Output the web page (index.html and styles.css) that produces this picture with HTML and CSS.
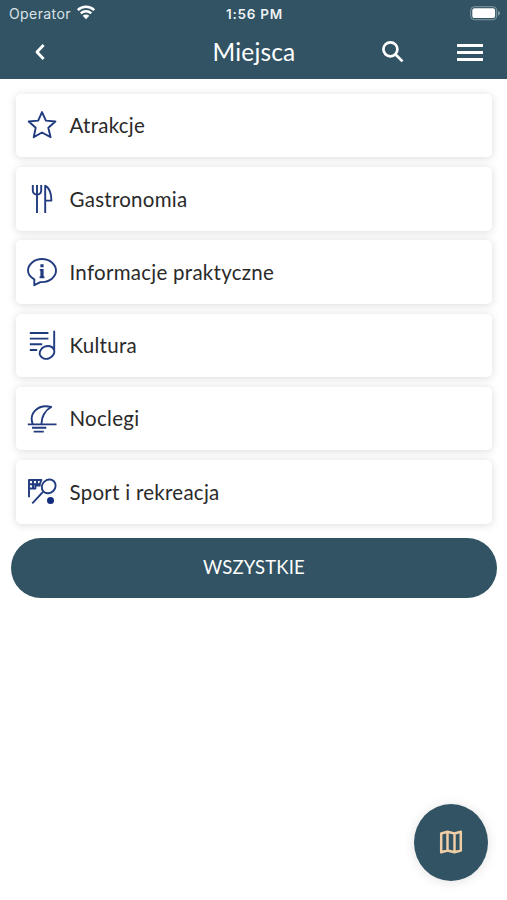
FILE: index.html
```html
<!DOCTYPE html>
<html lang="pl">

<head>
    <meta charset="UTF-8" />
    <meta name="viewport" content="width=device-width, initial-scale=1.0" />
    <title>Miejsca</title>
    <link rel="stylesheet" href="styles.css">
</head>

<body>
    <header class="header">
        <div class="status">
            <div class="operator">
                <span>Operator</span>
                <svg class="wifi" viewBox="0 0 20 15">
                    <path d="M1.8 5.2a11.6 11.6 0 0 1 16.4 0M4.8 8.3a7.4 7.4 0 0 1 10.4 0" />
                    <path class="dot" d="M10 14.2l-3.3-3.4a4.7 4.7 0 0 1 6.6 0z" />
                </svg>
            </div>
            <div class="time">1:56 PM</div>
            <svg class="battery" viewBox="0 0 31 15">
                <rect class="case" x=".7" y=".7" width="26" height="13" rx="3.6" />
                <rect x="2.3" y="2.3" width="22.8" height="9.8" rx="2.2" />
                <path class="tip" d="M28 4.8q2 .8 2 2.4t-2 2.4z" />
            </svg>
        </div>
        <nav class="navbar">
            <button class="back">
                <svg viewBox="0 0 12 18">
                    <path d="M9.6 2L3 9l6.6 7" />
                </svg>
            </button>
            <h1>Miejsca</h1>
            <div class="actions">
                <button class="search">
                    <svg viewBox="0 0 24 24">
                        <circle cx="9.4" cy="9.3" r="7" />
                        <path d="M14.3 14.2l7.2 7.2" />
                    </svg>
                </button>
                <button class="menu">
                    <span></span>
                    <span></span>
                    <span></span>
                </button>
            </div>
        </nav>
    </header>

    <main>
        <ul class="places">
            <li>
                <svg viewBox="0 0 30 30">
                    <path d="M15 2.1l3.9 8.5 9.5.9-7.1 6.3 2.3 9.4-8.6-4.7-8.3 4.7 2-9.4-7-6.3 9.5-.9z" />
                </svg>
                <span>Atrakcje</span>
            </li>
            <li>
                <svg viewBox="0 0 30 30">
                    <path d="M5.8 1v5.5c0 5.4 8.4 5.4 8.4 0V1M10 1v28M18.2 29V1.8c4 1.5 6.3 8 6.2 14.8h-6.2" />
                </svg>
                <span>Gastronomia</span>
            </li>
            <li>
                <svg viewBox="0 0 30 30">
                    <path d="M7.3 28.2V22.3C3.4 20.2 1 17 1 13.6 1 7.2 7.3 2 15 2s14 5.2 14 11.6-6.3 11.5-14 11.5h-1.6z" />
                    <path class="letter" d="M15 7.2v3M15 12v8.6" />
                    <path d="M12.8 12.9H15M12.6 20.2h4.8" />
                </svg>
                <span>Informacje praktyczne</span>
            </li>
            <li>
                <svg viewBox="0 0 30 30">
                    <path d="M2.8 3h18.6M2.8 8.6h18.6M2.8 14.3h12.4M2.8 20h7.4M27.2.8v18.9" />
                    <ellipse cx="20" cy="22.4" rx="7.5" ry="6.2" transform="rotate(-24 20 22.4)" />
                </svg>
                <span>Kultura</span>
            </li>
            <li>
                <svg viewBox="0 0 30 30">
                    <path d="M.8 20.4h28.7M5 23.8h14.3M6.7 27.6h10.1" />
                    <path d="M5.7 20.2C1.8 9.5 10.5-.2 24.2 3c-6.3 3.2-10 10.5-9.6 17.2" />
                </svg>
                <span>Noclegi</span>
            </li>
            <li>
                <svg viewBox="0 0 30 30">
                    <path d="M2 20.3V3h12.4l-1.6 4v1.5H8.4v3H2M2 7.2h11M6 3v8.4M10 3v5.4M16 14.8L5.3 26.4" />
                    <ellipse cx="21.7" cy="9.4" rx="7.3" ry="6.5" transform="rotate(-45 21.7 9.4)" />
                    <circle class="ball" cx="23.5" cy="23.6" r="3.5" />
                </svg>
                <span>Sport i rekreacja</span>
            </li>
        </ul>
        <button class="all">WSZYSTKIE</button>
    </main>

    <button class="map">
        <svg viewBox="0 0 24 24">
            <path d="M2.2 3.5l6.3-1.8 7 1.8 6.3-1.8v18.8l-6.3 1.8-7-1.8-6.3 1.8zM8.5 2v18.5M15.5 3.5V22" />
        </svg>
    </button>
</body>

</html>
```
FILE: styles.css
```css
* {
    box-sizing: border-box;
    margin: 0;
    padding: 0;
}

body {
    font-family: Lato, 'Open Sans', sans-serif;
    background: #fff;
    color: #2a2a2a;
    min-height: 100vh;
}

button {
    border: none;
    background: transparent;
    color: #fff;
    font-family: inherit;
    cursor: pointer;
}

svg {
    display: block;
    fill: none;
    stroke-linejoin: round;
}

.header {
    height: 79px;
    background: #315363;
    color: #fff;
}

.status {
    display: grid;
    grid-template-columns: 1fr auto 1fr;
    align-items: center;
    height: 27px;
    padding: 0 6px 0 9px;
    font-family: Inter, sans-serif;
    font-size: 14px;
}

.operator {
    display: flex;
    align-items: center;
    gap: 5px;
    color: #dce3e8;
    letter-spacing: 0.4px;
}

.wifi {
    width: 20px;
    height: 15px;
    margin-top: -2px;
    stroke: #fff;
    stroke-width: 2.5;
}

.wifi .dot {
    fill: #fff;
    stroke: none;
}

.time {
    margin-right: 1px;
    font-weight: 600;
    font-size: 13.5px;
    letter-spacing: 0.75px;
    color: #eef2f4;
}

.battery {
    justify-self: end;
    width: 31px;
    height: 15px;
    margin-top: -1px;
    fill: #fff;
}

.battery .case {
    fill: none;
    stroke: #8399a3;
}

.battery .tip {
    fill: #8399a3;
}

.navbar {
    display: grid;
    grid-template-columns: 1fr auto 1fr;
    align-items: center;
    height: 50px;
    padding: 0 24px 0 34px;
}

.back svg {
    width: 12px;
    height: 18px;
    stroke: #fff;
    stroke-width: 2.8;
}

.navbar h1 {
    margin: -2px 9px 0 0;
    font-size: 24.5px;
    font-weight: 400;
    letter-spacing: 0.15px;
}

.actions {
    display: flex;
    justify-content: flex-end;
    align-items: center;
    gap: 52.5px;
}

.search svg {
    width: 24px;
    height: 24px;
    stroke: #fff;
    stroke-width: 2.7;
}

.menu {
    display: flex;
    flex-direction: column;
    gap: 4px;
    width: 26px;
}

.menu span {
    height: 3px;
    background: #fff;
}

main {
    padding: 14.7px 10px 0 11px;
}

.places {
    list-style: none;
    display: grid;
    gap: 9.7px;
    padding: 0 5px;
}

.places li {
    display: flex;
    align-items: center;
    gap: 12.3px;
    height: 63.6px;
    padding-left: 11.2px;
    border-radius: 5px;
    background: #fff;
    box-shadow: 0 1px 9px rgba(0, 0, 0, 0.15);
    font-size: 20.5px;
    letter-spacing: 0.27px;
}

.places span {
    padding-bottom: 0.4px;
}

.places svg {
    width: 30px;
    height: 30px;
    stroke: #213b7f;
    stroke-width: 1.9;
}

.places .letter {
    stroke-width: 3.2;
}

.places .ball {
    fill: #102c80;
    stroke: none;
}

.all {
    display: block;
    width: 100%;
    height: 60px;
    margin-top: 14.3px;
    padding-bottom: 1px;
    border-radius: 30px;
    background: #315363;
    font-size: 18.5px;
    letter-spacing: 0.15px;
}

/* floating map button */
.map {
    position: fixed;
    right: 19px;
    bottom: 19.5px;
    display: flex;
    justify-content: center;
    align-items: center;
    width: 74px;
    height: 77px;
    border-radius: 50%;
    background: #315363;
    box-shadow: 0 1px 12px rgba(0, 0, 0, 0.12);
}

.map svg {
    width: 24px;
    height: 24px;
    stroke: #efcda5;
    stroke-width: 2.5;
}
```
